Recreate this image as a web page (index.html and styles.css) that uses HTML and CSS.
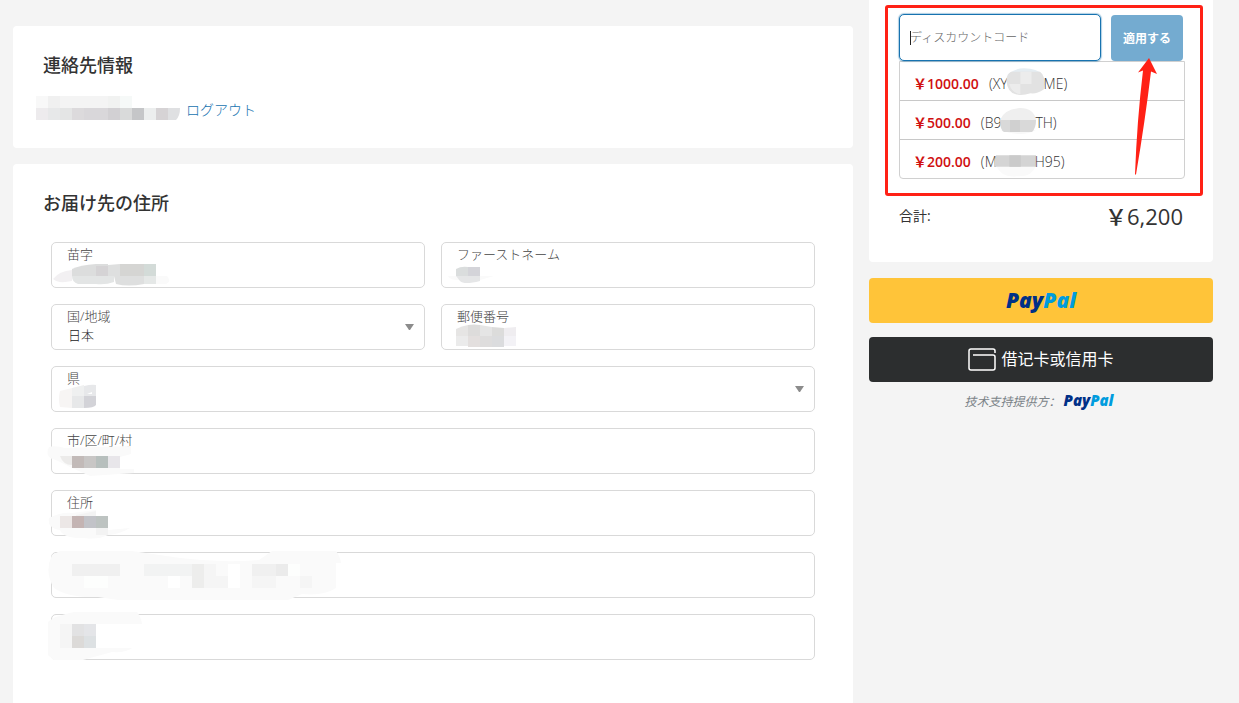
FILE: index.html
```html
<!DOCTYPE html>
<html lang="ja">
<head>
<meta charset="utf-8">
<meta name="viewport" content="width=device-width, initial-scale=1">
<title>お届け先の住所</title>
<link rel="stylesheet" href="styles.css">
</head>
<body>
<div class="page">
  <main class="main">
    <section class="card contact">
      <h2 class="title">連絡先情報</h2>
      <div class="account">
        <svg class="account-mask" viewBox="36 96 146 24" width="146" height="24" aria-hidden="true">
          <path fill="#f8f8f8" d="M36 96h12v12H36z"/><path fill="#f0f0f0" d="M48 96h12v12H48z"/><path fill="#f4f4f4" d="M60 96h48v12H60z"/><path fill="#f1f2f1" d="M108 96h12v12h-12z"/><path fill="#f6f9f8" d="M120 96h12v12h-12z"/>
          <path fill="#edebed" d="M36 108h12v12H36z"/><path fill="#e7e8e9" d="M48 108h12v12H48z"/><path fill="#e4e5e5" d="M60 108h12v12H60z"/><path fill="#dcdadc" d="M72 108h12v12H72z"/><path fill="#d9d7da" d="M84 108h24v12H84z"/><path fill="#d2d0d3" d="M108 108h12v12h-12z"/><path fill="#d9dada" d="M120 108h12v12h-12z"/><path fill="#c5c6c8" d="M132 108h12v12h-12z"/><path fill="#eceeee" d="M144 108h12v12h-12z"/><path fill="#d6d3d5" d="M156 108h12v12h-12z"/><path fill="#dfe0e2" d="M168 108h12q0 8-4 12h-8z"/>
        </svg>
        <a class="link" href="#">ログアウト</a>
      </div>
    </section>

    <section class="card address">
      <h2 class="title">お届け先の住所</h2>
      <form class="fields">
        <div class="field half">
          <label for="last">苗字</label>
          <input id="last" type="text">
          <svg class="mask" viewBox="48 242 300 46" width="300" height="46" aria-hidden="true">
            <path fill="#f2f0f2" d="M53 279q6-8 19-9v11q-14 3-19-2z"/><path fill="#fafafa" d="M156 276h11q5 5-1 8h-10z"/>
            <path fill="#dcdddd" d="M72 269q8-4 24-5h12v12H72z"/><path fill="#d5d3d5" d="M96 266h12v10H96z"/><path fill="#dedfdf" d="M108 265l12-1v12h-12z"/><path fill="#d5d5d3" d="M120 264h24v12h-24z"/><path fill="#d3dbd8" d="M144 264h12v12h-12z"/>
            <path fill="#e3e5e5" d="M72 276h42v6q-8 3-18 2H78q-6-2-6-8z"/><path fill="#dedfdf" d="M114 276h30v8q-16 3-28 0z"/><path fill="#e5e8e7" d="M144 276h12v8h-12z"/>
          </svg>
        </div>
        <div class="field half">
          <label for="first">ファーストネーム</label>
          <input id="first" type="text">
          <svg class="mask" viewBox="438 242 300 46" width="300" height="46" aria-hidden="true">
            <path fill="#fafafa" d="M448 276h46l-14 4h-24q-7-1-8-4z"/><path fill="#dadddd" d="M456 269q5-3 12-2v9h-12z"/><path fill="#d4d4d9" d="M468 267h12v9h-12z"/><path fill="#e5e6e7" d="M456 276h24v5q-16 4-20 0z"/>
          </svg>
        </div>
        <div class="field half">
          <label for="country">国/地域</label>
          <select id="country"><option>日本</option></select>
          <svg class="arrow" viewBox="0 0 9 6" width="9" height="6" aria-hidden="true"><path d="M0 0h9L5 6H4z"/></svg>
        </div>
        <div class="field half">
          <label for="zip">郵便番号</label>
          <input id="zip" type="text">
          <svg class="mask" viewBox="438 304 300 46" width="300" height="46" aria-hidden="true">
            <path fill="#e6e5e4" d="M456 329q6-3 12-4v11h-12z"/><path fill="#dddcdb" d="M468 325q6-1 12 0v11h-12z"/><path fill="#e5e5e5" d="M480 325l12 2v9h-12z"/><path fill="#dcdcdb" d="M492 327l12 1v8h-12z"/><path fill="#efedf0" d="M504 328l12-1v9h-12z"/>
            <path fill="#ebebeb" d="M456 336h12v10h-12z"/><path fill="#e3dfde" d="M468 336h12v11h-12z"/><path fill="#dedddd" d="M480 336h12v11h-12z"/><path fill="#dbdcde" d="M492 336h12v11h-12z"/><path fill="#f3f2f6" d="M504 336h12v10h-12z"/>
          </svg>
        </div>
        <div class="field">
          <label for="pref">県</label>
          <select id="pref"><option></option></select>
          <svg class="arrow" viewBox="0 0 9 6" width="9" height="6" aria-hidden="true"><path d="M0 0h9L5 6H4z"/></svg>
          <svg class="mask" viewBox="48 366 300 46" width="300" height="46" aria-hidden="true">
            <path fill="#f7f5f4" d="M60 391l12-3v20l-12-1q-2-8 0-16z"/><path fill="#eff0f0" d="M72 388l12-3v11H72z"/><path fill="#e7e8ea" d="M84 386q8-2 12-1v11H84z"/><path fill="#e7e8e9" d="M72 396h12v12H72z"/><path fill="#d3d3d8" d="M84 396h12v9q-2 3-12 3z"/><path fill="#fff" d="M87 394l5-2v2z"/>
          </svg>
        </div>
        <div class="field">
          <label for="city">市/区/町/村</label>
          <input id="city" type="text">
          <svg class="mask" viewBox="48 428 300 46" width="300" height="46" aria-hidden="true">
            <path fill="#fafafa" d="M49 447q6-2 16 1l66-2v8l-11 3v12h14v4l-44 3-20-9-14-7q-12-2-7-13z"/>
            <path fill="#ecebea" d="M60 456h12v9q-9 0-12-9z"/><path fill="#c2bab8" d="M72 456h12v12H72z"/><path fill="#c8c6c5" d="M84 456h12v12H84z"/><path fill="#b7bfbd" d="M96 456h12v12H96z"/><path fill="#e8e6ea" d="M108 456h12v12h-12z"/>
          </svg>
        </div>
        <div class="field">
          <label for="street">住所</label>
          <input id="street" type="text">
          <svg class="mask" viewBox="48 490 300 52" width="300" height="52" aria-hidden="true">
            <path fill="#fafafa" d="M49 518q12-6 23-5l24-3v6h12v14l22-2q-10 6-22 7-10 5-24 3-20 1-24-8-13-2-11-12z"/><path fill="#f3f3f3" d="M76 515l20-4v5H76zM96 528h12v7H96z"/>
            <path fill="#ece7e6" d="M60 516h12v12H60z"/><path fill="#c4b4b3" d="M72 516h12v12H72z"/><path fill="#c2c3c8" d="M84 516h12v12H84z"/><path fill="#bdc3c1" d="M96 516h12v12H96z"/>
          </svg>
        </div>
        <div class="field">
          <input id="building" type="text" aria-label="建物名">
          <svg class="mask" viewBox="48 552 300 48" width="300" height="48" aria-hidden="true">
            <path fill="#fafafa" d="M52 555l8-4h72l48 7q40 5 79 2l13-9h64q4 5 5 12h-5v25q-12 8-34 6l-14 6H118l-20-3q-30 1-44-9-10-16-2-33z"/>
            <path fill="#f0f0f0" d="M72 564h48v12H72zM252 564h24v12h-24z"/><path fill="#f2f3f3" d="M144 564h48v12h-48z"/><path fill="#f5f5f5" d="M204 576h24v12h-24z"/><path fill="#ededec" d="M192 564h12v24h-12z"/><path fill="#fff" d="M228 564h12v24h-12zM168 576h12v12h-12z"/><path fill="#ebebeb" d="M276 564h12v12h-12z"/><path fill="#f5f5f5" d="M204 564h12v12h-12zM252 576h24v12h-24zM300 576h12v12h-12z"/><path fill="#fdfefd" d="M84 576h24v12H84zM288 564h12v12h-12z"/>
          </svg>
        </div>
        <div class="field">
          <input id="phone" type="tel" aria-label="電話番号">
          <svg class="mask" viewBox="48 614 300 48" width="300" height="48" aria-hidden="true">
            <path fill="#fafafa" d="M48 622q6-6 26-10h63q4 5 5 12H96v24h36q-6 5-20 4l-29 8H54l-6-5z"/>
            <path fill="#f5f5f5" d="M60 624h12v24H60z"/><path fill="#e2e2e3" d="M72 624h12v12H72z"/><path fill="#e4e5e8" d="M84 624h12v12H84z"/><path fill="#dcdad8" d="M72 636h12v12H72z"/><path fill="#dde1e3" d="M84 636h12v12H84z"/>
          </svg>
        </div>
      </form>
    </section>
  </main>

  <aside class="side">
    <section class="card summary">
      <form class="discount">
        <div class="code">
          <input id="code" type="text" placeholder="ディスカウントコード" aria-label="ディスカウントコード">
          <span class="caret"></span>
        </div>
        <button class="apply" type="button">適用する</button>
      </form>
      <ul class="coupons">
        <li><strong>￥1000.00</strong><span>(XY</span><svg class="blot" viewBox="1006 69 40 30" width="38" height="28" aria-hidden="true"><path fill="#e5edf2" d="M1006 74q8-7 18-7 14 0 20 7z"/><path fill="#e2e2e2" d="M1005 80q0-6 5-9h31q5 4 5 13l-1 6q-8 5-14 4-10 3-16 1-9-2-10-15z"/><path fill="#ececec" d="M1020 71h12v13h-12zM1008 84h12v11q-9-1-12-11z"/></svg><span>ME)</span></li>
        <li><strong>￥500.00</strong><span>(B9</span><svg class="blot" viewBox="1000 109 36 28" width="36" height="28" aria-hidden="true"><path fill="#efefef" d="M1000 120q4-11 20-12 14 0 16 12z"/><path fill="#f8f8f8" d="M1000 130h36q-14 8-36 0z"/><path fill="#d9d9d9" d="M1000 120h36q0 8-4 12h-28q-4-2-4-12z"/><path fill="#d0d0d0" d="M1010 120h10v12h-10z"/></svg><span>TH)</span></li>
        <li><strong>￥200.00</strong><span>(M</span><svg class="blot" viewBox="994 149 42 28" width="40" height="28" aria-hidden="true"><path fill="#fafafa" d="M994 167h42q-4 12-20 11-16 2-22-11z"/><path fill="#d4d4d4" d="M994 156h42v12h-44q0-6 2-12z"/><path fill="#cacaca" d="M1008 156h12v12h-12z"/></svg><span>H95)</span></li>
      </ul>
      <div class="total"><span>合計:</span><strong>￥6,200</strong></div>
      <div class="highlight"></div>
      <svg class="pointer" viewBox="1134 58 24 118" width="24" height="118" aria-hidden="true"><path d="M1149 58l8 16-6-2.500q-6 50-15 103h-1q2-54 8-104l-5 2z"/></svg>
    </section>

    <div class="payments">
      <button class="pay pay-yellow" type="button" aria-label="PayPal"><span class="paypal">Pay<b>Pal</b></span></button>
      <button class="pay pay-dark" type="button" lang="zh-CN">
        <svg viewBox="0 0 28 23" width="28" height="23" aria-hidden="true"><path d="M27 5V3q0-2-2-2H3Q1 1 1 3v17q0 2 2 2h22q2 0 2-2V9q0-2-2-2H5"/></svg>
        <span>借记卡或信用卡</span>
      </button>
      <p class="powered" lang="zh-CN"><em>技术支持提供方：</em><span class="paypal small">Pay<b>Pal</b></span></p>
    </div>
  </aside>
</div>
</body>
</html>
```

FILE: styles.css
```css
* {
  box-sizing: border-box;
}

body {
  margin: 0;
  background: #f4f4f4;
  color: #333;
  font-family: "Open Sans", "Noto Sans CJK JP", sans-serif;
  font-size: 14px;
}

input,
select,
button {
  font-family: inherit;
}

.page {
  display: grid;
  grid-template-columns: minmax(0, 1fr) 344px;
  gap: 16px;
  min-height: 100vh;
  padding: 0 26px 0 13px;
}

.main {
  display: flex;
  flex-direction: column;
  gap: 16px;
  padding-top: 26px;
}

.card {
  background: #fff;
  border-radius: 4px;
}

.title {
  margin: 0;
  padding: 0 30px;
  font-size: 18px;
  font-weight: 500;
  line-height: 26px;
}

.contact {
  padding: 26px 0 28px;
}

.account {
  display: flex;
  align-items: flex-end;
  gap: 4px;
  padding: 18px 23px 0;
}

.link {
  color: #1773b0;
  font-size: 14px;
  font-weight: 300;
  line-height: 20px;
  text-decoration: none;
}

.address {
  flex: 1;
  padding: 26px 0 36px;
  border-radius: 4px 4px 0 0;
}

.fields {
  display: grid;
  grid-template-columns: 1fr 1fr;
  gap: 16px;
  padding: 26px 38px 0;
}

.field {
  position: relative;
  grid-column: span 2;
  height: 46px;
}

.half {
  grid-column: span 1;
}

.field label {
  position: absolute;
  top: 3px;
  left: 16px;
  color: #444;
  font-size: 13px;
  font-weight: 300;
  line-height: 18px;
}

.field input,
.field select {
  display: block;
  width: 100%;
  height: 100%;
  padding: 16px 16px 0;
  border: 1px solid #d9d9d9;
  border-radius: 5px;
  background: #fff;
  color: #222;
  font-size: 13px;
  font-weight: 300;
  appearance: none;
}

.mask {
  position: absolute;
  top: 0;
  left: -3px;
  overflow: visible;
  pointer-events: none;
}

.arrow {
  position: absolute;
  top: 20px;
  right: 11px;
  fill: #8c8c8c;
  pointer-events: none;
}

.summary {
  position: relative;
  padding: 14px 28px 30px 30px;
  border-radius: 0 0 4px 4px;
}

.discount {
  display: flex;
  gap: 10px;
  padding-right: 2px;
}

.code {
  position: relative;
  flex: 1;
}

.code input {
  display: block;
  width: 100%;
  height: 47px;
  padding: 0 10px;
  border: 1px solid #1773b0;
  border-radius: 5px;
  background: #fff;
  box-shadow: 0 0 1px 1px rgba(23, 115, 176, 0.35);
  font-size: 12px;
}

.code input::placeholder {
  color: #666;
  font-weight: 300;
}

.caret {
  position: absolute;
  top: 17px;
  left: 11px;
  width: 1px;
  height: 14px;
  background: #222;
}

.apply {
  width: 72px;
  height: 46px;
  margin-top: 1px;
  padding: 0;
  border: 0;
  border-radius: 4px;
  background: #74abd0;
  color: #fff;
  font-size: 12px;
  font-weight: 700;
}

.coupons {
  margin: 0;
  padding: 0;
  border: 1px solid #d0d0d0;
  border-radius: 0 0 4px 4px;
  list-style: none;
}

.coupons li {
  display: flex;
  align-items: center;
  height: 39px;
  padding: 5px 13px 0;
  line-height: 20px;
}

.coupons li:first-child {
  height: 38px;
}

.coupons li + li {
  border-top: 1px solid #c8c8c8;
}

.coupons strong {
  margin-right: 10px;
  color: #d01010;
  font-weight: 600;
}

.coupons span {
  font-weight: 300;
}

.blot {
  margin: 0 -1px;
  overflow: visible;
}

.total {
  display: flex;
  align-items: center;
  justify-content: space-between;
  padding: 21px 2px 0 0;
  line-height: 32px;
}

.total strong {
  font-size: 22px;
  font-weight: 500;
}

.highlight {
  position: absolute;
  top: 5px;
  right: 10px;
  left: 16px;
  height: 191px;
  border: 3px solid #ff2116;
  border-radius: 3px;
  pointer-events: none;
}

.pointer {
  position: absolute;
  top: 58px;
  right: 55px;
  fill: #ff2116;
  pointer-events: none;
}

.payments {
  display: flex;
  flex-direction: column;
  gap: 14px;
  padding-top: 16px;
}

.pay {
  display: flex;
  align-items: center;
  justify-content: center;
  gap: 5px;
  width: 100%;
  height: 45px;
  padding: 0;
  border: 0;
  border-radius: 4px;
}

.pay-yellow {
  background: #ffc439;
}

.pay-dark {
  background: #2c2e2f;
  color: #fff;
  font-family: "Noto Sans CJK SC", sans-serif;
  font-size: 16px;
}

.pay-dark svg {
  fill: none;
  stroke: #fff;
  stroke-width: 1.500;
}

.pay-dark span {
  padding-bottom: 4px;
}

.paypal {
  color: #003087;
  font-family: "Open Sans", sans-serif;
  font-size: 21px;
  font-style: italic;
  font-weight: 800;
  line-height: 24px;
}

.paypal b {
  color: #009cde;
  font-weight: 800;
}

.pay-yellow .paypal {
  padding-bottom: 2px;
}

.small {
  font-size: 15px;
}

.powered {
  display: flex;
  align-items: center;
  justify-content: center;
  gap: 3px;
  margin: 0;
  margin-top: -8px;
  padding-right: 4px;
  color: #7b8388;
  font-family: "Noto Sans CJK SC", sans-serif;
  font-size: 12px;
}
```
